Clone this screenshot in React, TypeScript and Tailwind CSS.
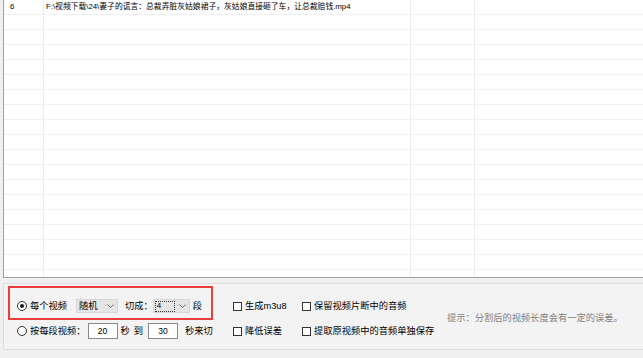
import React from "react";

const Chevron = () => (
  <svg width="7" height="4" viewBox="0 0 7 4" className="shrink-0">
    <path d="M0.5 0.5 L3.5 3.5 L6.5 0.5" fill="none" stroke="#6b6b6b" strokeWidth="1" />
  </svg>
);

const Radio = ({ checked }: { checked?: boolean }) => (
  <div className="w-[10px] h-[10px] rounded-full border border-[#333] bg-white flex items-center justify-center shrink-0">
    {checked && <div className="w-[4px] h-[4px] rounded-full bg-[#1a1a1a]" />}
  </div>
);

const Check = ({ label }: { label: string }) => (
  <div className="flex items-center h-[16px]">
    <div className="w-[9px] h-[9px] border border-[#333] bg-white shrink-0" />
    <span className="ml-[3px] whitespace-nowrap">{label}</span>
  </div>
);

const rows = Array(19).fill(null);

export default function App() {
  return (
    <div className="w-[643px] h-[358px] overflow-hidden bg-[#f0f0f0] font-['Liberation_Sans','Noto_Sans_CJK_SC',sans-serif] text-[#000]">
      {/* file list grid */}
      <div className="ml-[3px] h-[278px] border-l border-b border-[#a0a0a0] bg-white overflow-hidden">
        {rows.map((_, i) => (
          <div key={i} className="flex h-[15px] border-b border-[#f0f0f0] text-[7.8px] leading-[14px]">
            <div className="w-[40px] border-r border-[#ececec] pl-[6px] shrink-0">{i === 0 ? "6" : ""}</div>
            <div className="w-[367px] border-r border-[#ececec] pl-[2px] shrink-0 whitespace-nowrap overflow-hidden">
              {i === 0 ? "F:\\视频下载\\24\\妻子的谎言：总裁弄脏灰姑娘裙子，灰姑娘直接砸了车，让总裁赔钱.mp4" : ""}
            </div>
            <div className="w-[64px] border-r border-[#ececec] shrink-0" />
            <div className="flex-1" />
          </div>
        ))}
      </div>

      {/* options panel */}
      <div className="mt-[5px] ml-[3px] h-[67px] w-[660px] border border-[#dcdcdc] bg-[#f3f3f3] flex text-[9.25px] leading-[12px]">
        <div className="pl-[4px] pt-[2px] shrink-0">
          <div className="w-[205px] h-[34px] border-2 border-[#ee3d3d] flex items-center pl-[7px] pt-[6px]">
            <Radio checked />
            <span className="ml-[3px] whitespace-nowrap">每个视频</span>
            <div className="ml-[9px] w-[42px] h-[14px] bg-[#e5e5e5] border border-[#d6d6d6] flex items-center justify-between pl-[2px] pr-[3px]">
              <span>随机</span>
              <Chevron />
            </div>
            <span className="ml-[7px] whitespace-nowrap">切成：</span>
            <div className="w-[37px] h-[14px] bg-[#e5e5e5] border border-[#d6d6d6] flex items-center justify-between pl-[1px] pr-[3px]">
              <div className="w-[20px] h-[11px] border border-dotted border-[#333] flex items-center pl-[1px] text-[8px]">4</div>
              <Chevron />
            </div>
            <span className="ml-[3px]">段</span>
          </div>
          <div className="mt-[3px] h-[16px] flex items-center pl-[9px]">
            <Radio />
            <span className="ml-[3px] whitespace-nowrap">按每段视频：</span>
            <div className="ml-[2px] w-[30px] h-[16px] bg-white border border-[#8a8a8a] flex items-center justify-center text-[8.5px]">20</div>
            <span className="ml-[3px]">秒</span>
            <span className="ml-[4px]">到</span>
            <div className="ml-[5px] w-[30px] h-[16px] bg-white border border-[#8a8a8a] flex items-center justify-center text-[8.5px]">30</div>
            <span className="ml-[7px] whitespace-nowrap">秒来切</span>
          </div>
        </div>

        <div className="ml-[20px] pt-[14px] w-[207px] shrink-0 grid grid-cols-[69px_1fr] gap-y-[9px] content-start">
          <Check label="生成m3u8" />
          <Check label="保留视频片断中的音频" />
          <Check label="降低误差" />
          <Check label="提取原视频中的音频单独保存" />
        </div>

        <div className="ml-[7px] mt-[28px] text-[#808080] whitespace-nowrap">提示：分割后的视频长度会有一定的误差。</div>
      </div>
    </div>
  );
}
